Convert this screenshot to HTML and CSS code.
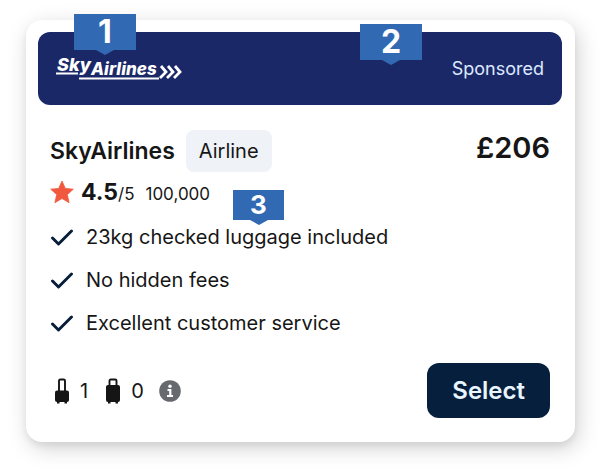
FILE: index.html
```html
<!DOCTYPE html>
<html lang="en">
<head>
<meta charset="utf-8">
<title>SkyAirlines offer</title>
<link rel="stylesheet" href="styles.css">
</head>
<body>
<article class="card">
  <header class="banner">
    <svg class="logo" viewBox="0 -6 128 38" role="img" aria-label="SkyAirlines">
      <g class="logo-text"><text class="logo-sky" x="1" y="15">Sky</text><text x="35" y="19">Airlines</text></g>
      <path d="M0 17.500H22M23 22.500H103" stroke="#fff" stroke-width="2" fill="none"/>
      <path d="M105 10l5 6-6 6M112 10l5 6-6 6M119 10l5 6-6 6" stroke="#fff" stroke-width="2.800" fill="none"/>
    </svg>
    <span class="sponsored">Sponsored</span>
    <span class="marker marker-logo">1</span>
    <span class="marker marker-banner">2</span>
  </header>
  <div class="content">
    <div class="heading">
      <h1 class="name">SkyAirlines</h1>
      <span class="tag">Airline</span>
      <span class="price">£206</span>
    </div>
    <div class="rating">
      <svg class="star" viewBox="0 0 24 24" aria-hidden="true"><path d="M12 1l3.300 7.400 8 .8-6 5.400 1.800 8.100L12 18.500l-7.100 4.200 1.800-8.100-6-5.400 8-.8z" fill="#f0593e" stroke="#f0593e" stroke-width=".8" stroke-linejoin="round"/></svg>
      <span class="score"><strong>4.5</strong>/5</span>
      <span class="reviews">100,000</span>
    </div>
    <div class="perks">
      <span class="marker marker-small">3</span>
      <ul class="list">
        <li><svg class="check" viewBox="0 0 24 18" aria-hidden="true"><path d="M2.500 9l6 6L21.500 2"/></svg>23kg checked luggage included</li>
        <li><svg class="check" viewBox="0 0 24 18" aria-hidden="true"><path d="M2.500 9l6 6L21.500 2"/></svg>No hidden fees</li>
        <li><svg class="check" viewBox="0 0 24 18" aria-hidden="true"><path d="M2.500 9l6 6L21.500 2"/></svg>Excellent customer service</li>
      </ul>
    </div>
    <footer class="footer">
      <svg class="bag" viewBox="0 0 16 26" aria-hidden="true"><path d="M5 13V2.800Q5 1.500 6.300 1.500h3.400Q11 1.500 11 2.800V13" fill="none" stroke="#151515" stroke-width="1.900"/><rect x="1" y="12.500" width="14" height="11.500" rx="2" fill="#151515"/><path d="M3 23h2.500v2.500H3zM10.500 23H13v2.500h-2.500z" fill="#151515"/></svg>
      <span class="count">1</span>
      <svg class="bag bag-large" viewBox="0 0 16 26" aria-hidden="true"><path d="M4.500 8V2.800Q4.500 1.500 5.800 1.500h4.400q1.300 0 1.300 1.300V8" fill="none" stroke="#151515" stroke-width="1.900"/><rect x="1" y="7" width="14" height="17" rx="2" fill="#151515"/><path d="M3 23h2.500v2.500H3zM10.500 23H13v2.500h-2.500z" fill="#151515"/></svg>
      <span class="count">0</span>
      <svg class="info" viewBox="0 0 22 22" role="img" aria-label="Baggage information"><circle cx="11" cy="11" r="10.800" fill="#66696d"/><circle cx="11" cy="6.300" r="1.700" fill="#fff"/><path d="M8.500 10H11.300V15.500M8 16h6" fill="none" stroke="#fff" stroke-width="2.200"/></svg>
      <button class="select" type="button">Select</button>
    </footer>
  </div>
</article>
</body>
</html>
```
FILE: styles.css
```css
* { box-sizing: border-box; }
body {
  margin: 0;
  padding: 20px 25px 32px 26px;
  background: #fff;
  color: #161616;
  font-family: Inter, "Liberation Sans", sans-serif;
}
.card {
  padding: 12px 13px 24px 12px;
  border-radius: 16px;
  background: #fff;
  box-shadow: 3px 6px 22px rgba(0, 0, 0, .18), 0 4px 6px rgba(0, 0, 0, .06);
}
.banner {
  position: relative;
  display: flex;
  align-items: center;
  justify-content: space-between;
  padding: 18px 18px 17px;
  border-radius: 12px;
  background: #1b2868;
}
.logo { width: 128px; height: 38px; }
.logo-text {
  fill: #fff;
  font-size: 17px;
  font-style: italic;
  font-weight: 800;
}
.logo-sky { font-size: 18px; }
.sponsored {
  color: #dde8ff;
  font-size: 18px;
  line-height: 38px;
}
.marker {
  position: absolute;
  width: 62px;
  height: 36px;
  background: #3269b3;
  color: #fff;
  font-size: 32px;
  font-weight: 700;
  line-height: 36px;
  text-align: center;
}
.marker::after {
  content: "";
  position: absolute;
  top: 100%;
  left: 50%;
  border: solid transparent;
  border-width: 5px 9px 0;
  border-top-color: #3269b3;
  transform: translateX(-50%);
}
.marker-logo { top: -18px; left: 36px; }
.marker-banner { top: -8px; left: 322px; }
.marker-small {
  top: -26px;
  left: 183px;
  width: 51px;
  height: 30px;
  font-size: 26px;
  line-height: 30px;
}
.content { padding: 25px 12px 0; }
.heading { display: flex; align-items: center; }
.name { margin: 0; font-size: 23px; font-weight: 600; }
.tag {
  margin-left: 11px;
  padding: 0 13px;
  border-radius: 8px;
  background: #eff3f8;
  font-size: 20px;
  line-height: 42px;
}
.price {
  margin-left: auto;
  padding-bottom: 6px;
  font-size: 29px;
  font-weight: 600;
  line-height: 36px;
}
.rating { display: flex; align-items: center; height: 44px; padding-bottom: 4px; }
.star { width: 24px; height: 24px; }
.score { margin-left: 7px; font-size: 17px; }
.score strong { font-size: 23px; font-weight: 700; }
.reviews { margin-left: 11px; padding-top: 4px; font-size: 17px; }
.perks { position: relative; }
.list { margin: 0; padding: 0; list-style: none; }
.list li {
  display: flex;
  align-items: center;
  gap: 12px;
  font-size: 20px;
  line-height: 43px;
}
.check {
  width: 24px;
  height: 18px;
  fill: none;
  stroke: #071d38;
  stroke-width: 2.9;
  stroke-linecap: round;
  stroke-linejoin: round;
}
.footer { display: flex; align-items: center; margin-top: 18px; }
.bag { width: 16px; height: 26px; margin-left: 4px; }
.bag-large { margin-left: 17px; }
.count { margin-left: 10px; font-size: 20px; }
.info { width: 22px; height: 22px; margin-left: 15px; }
.select {
  margin-left: auto;
  padding: 0 25px;
  border: 0;
  border-radius: 12px;
  background: #061f3c;
  color: #e9f5ff;
  font: 600 24px/55px Inter, "Liberation Sans", sans-serif;
}
```
